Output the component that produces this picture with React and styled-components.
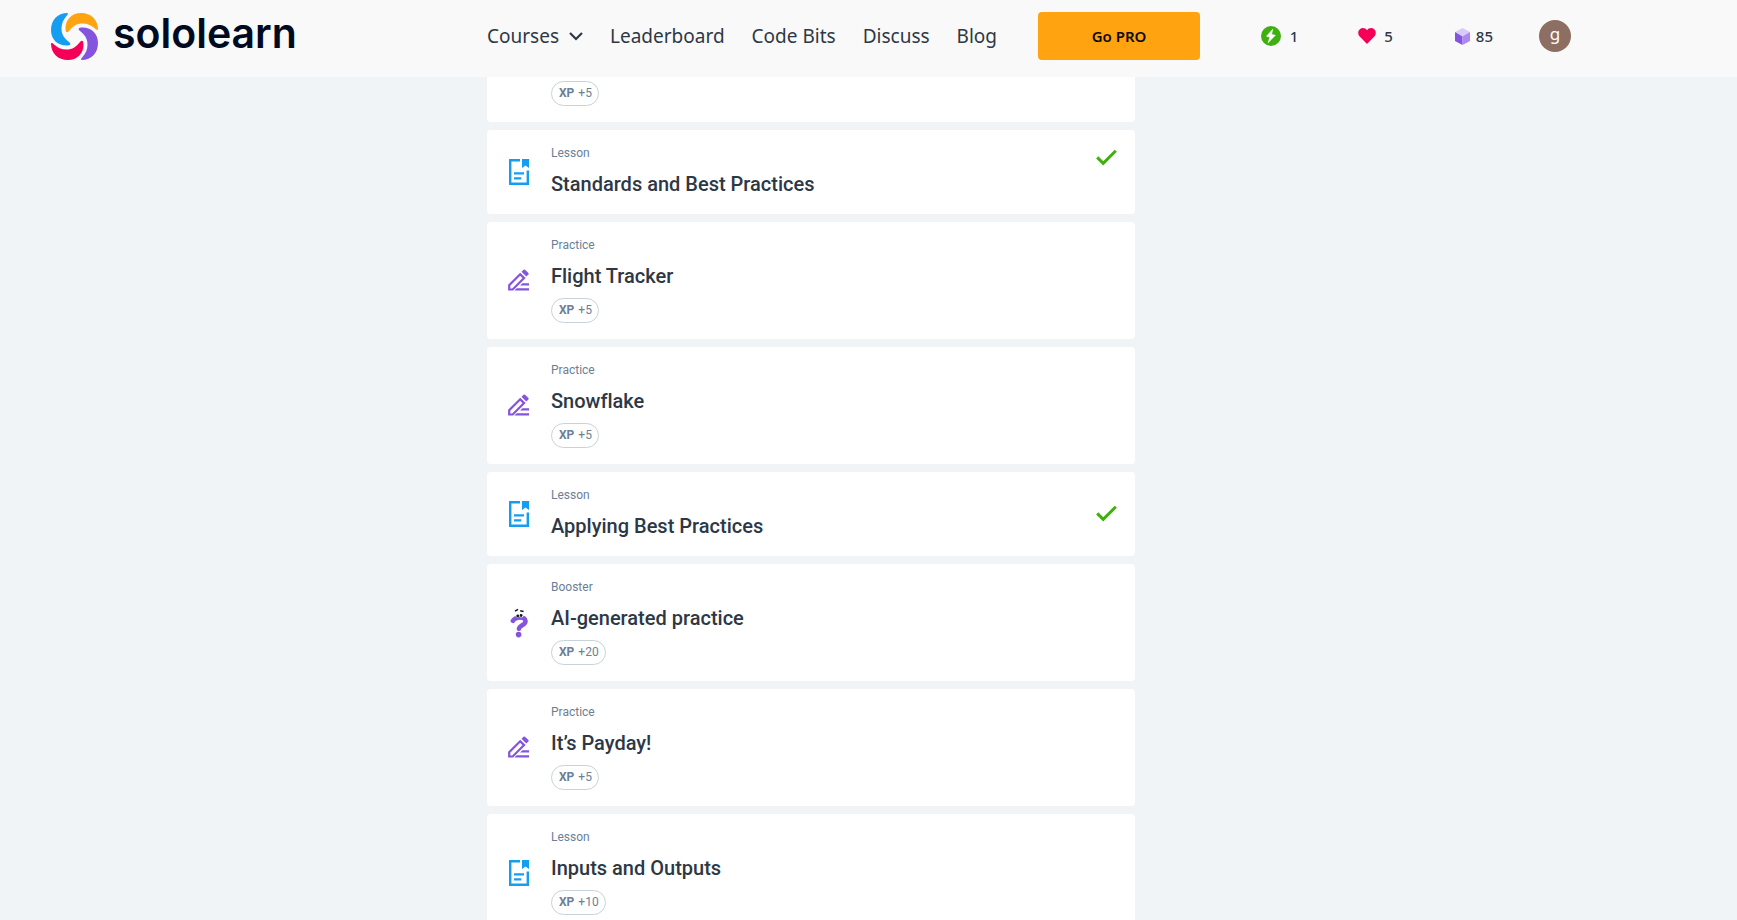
import React from "react";
import styled, { createGlobalStyle } from "styled-components";

const GlobalStyle = createGlobalStyle`
  * { box-sizing: border-box; }
  body {
    margin: 0;
    background: #f0f4f7;
    color: #2d3846;
    font-family: Roboto, "Noto Sans", sans-serif;
  }
`;

const Page = styled.div`
  display: flex;
  flex-direction: column;
  height: 100vh;
`;

const Header = styled.header`
  display: grid;
  grid-template-columns: 1fr 648px 1fr;
  flex: none;
  height: 77px;
  padding: 0 166px 5px 51px;
  align-items: center;
  background: #f9f9f9;
`;

const Logo = styled.a`
  display: flex;
  align-items: center;
  gap: 15px;
  color: #000b21;
  font: 600 41px/46px Inter, sans-serif;
  text-decoration: none;
`;

const Wordmark = styled.span`
  padding-bottom: 6px;
`;

const Middle = styled.div`
  display: flex;
  align-items: center;
  justify-content: space-between;
  margin-right: -65px;
`;

const Nav = styled.nav`
  display: flex;
  align-items: center;
  gap: 27px;
`;

const NavLink = styled.a`
  color: #2d3846;
  font: 400 19px/24px "Noto Sans", sans-serif;
  text-decoration: none;
  white-space: nowrap;
`;

const NavButton = styled.button`
  display: flex;
  align-items: center;
  gap: 10px;
  padding: 0;
  border: 0;
  background: none;
  color: #2d3846;
  font: 400 19px/24px "Noto Sans", sans-serif;
`;

const ProButton = styled.button`
  width: 162px;
  height: 48px;
  border: 0;
  border-radius: 4px;
  background: #ffa310;
  color: #0b0b12;
  font: 600 15px/24px "Noto Sans", sans-serif;
`;

const Status = styled.div`
  display: flex;
  align-items: center;
  justify-content: flex-end;
`;

const Counter = styled.div`
  display: flex;
  align-items: center;
  gap: ${(p) => p.$gap}px;
  margin-right: ${(p) => p.$after}px;
  font: 500 15px/24px "Noto Sans", sans-serif;
`;

const Avatar = styled.button`
  width: 32px;
  height: 32px;
  padding: 0 0 4px;
  border: 0;
  border-radius: 50%;
  background: #8d6e63;
  color: #fff;
  font: 400 17px/24px "Noto Sans", sans-serif;
`;

const Main = styled.main`
  flex: 1;
  min-height: 0;
  padding-right: 115px;
  overflow-y: auto;
  scrollbar-width: none;
`;

const Lessons = styled.ul`
  display: flex;
  flex-direction: column;
  gap: 8px;
  width: 648px;
  max-width: 100%;
  margin: 0 auto;
  padding: 0;
  list-style: none;
`;

const Card = styled.li`
  display: flex;
  align-items: center;
  gap: 20px;
  padding: ${(p) => (p.$continued ? "4px 16px 16px 20px" : "16px 16px 16px 20px")};
  border-radius: ${(p) => (p.$continued ? "0 0 4px 4px" : "4px")};
  background: #fff;
`;

const IconSlot = styled.div`
  display: flex;
  flex: none;
  justify-content: center;
  width: 24px;
`;

const Body = styled.div`
  flex: 1;
`;

const Kind = styled.div`
  margin-bottom: 12px;
  color: #6b7f96;
  font-size: 12px;
  line-height: 14px;
`;

const Title = styled.h2`
  margin: 0;
  padding-bottom: 2px;
  font-size: 20px;
  font-weight: 500;
  font-variant-ligatures: none;
  line-height: 24px;
`;

const Badge = styled.span`
  display: flex;
  align-items: center;
  gap: 4px;
  width: fit-content;
  height: 25px;
  margin-top: ${(p) => (p.$flush ? 0 : 8)}px;
  padding: 0 6px 1px 7px;
  border: 1px solid #c8d2db;
  border-radius: 13px;
  color: #6b7f96;
  font-size: 12px;
  line-height: 16px;
`;

const Strong = styled.b`
  font-weight: 700;
`;

const Done = styled.div`
  display: flex;
  flex: none;
  align-self: ${(p) => (p.$top ? "flex-start" : "center")};
`;

const petal =
  "M16.5 0C6.500 0 0 7 0 17C0 26 6 32.500 15.500 32.500C19.500 32.500 20.500 31 18 29C13 25 10.500 21.500 10.500 15.500C10.500 10 12.500 6.500 15.500 3C17.500 1 17 0 16.500 0Z";

const LogoMark = () => (
  <svg width="47" height="47" viewBox="0 0 47 47" aria-hidden="true">
    <path d={petal} fill="#149ef2" />
    <path d={petal} fill="#ffa310" transform="rotate(90 23.5 23.500)" />
    <path d={petal} fill="#8454de" transform="rotate(180 23.5 23.500)" />
    <path d={petal} fill="#f50057" transform="rotate(270 23.5 23.500)" />
  </svg>
);

const Chevron = () => (
  <svg width="14" height="9" viewBox="0 0 14 9" fill="none" stroke="#2d3846" strokeWidth="2.2" aria-hidden="true">
    <path d="M1 1l6 6 6-6" />
  </svg>
);

const Bolt = () => (
  <svg width="20" height="20" viewBox="0 0 20 20" aria-hidden="true">
    <circle cx="10" cy="10" r="10" fill="#3fb00e" />
    <path d="M11.8 3.200L5.500 10.300l3.300.8-1.700 5.700 7.200-7.500-3.700-.9z" fill="#fff" stroke="#fff" strokeWidth=".6" strokeLinejoin="round" />
  </svg>
);

const Heart = () => (
  <svg width="18" height="16" viewBox="0 0 18 16" aria-hidden="true">
    <path d="M9 16L1.700 8.600C-.3 6.400-.2 3.100 1.600 1.400C3.800-.6 7.300-.3 9 2.300C10.700-.3 14.200-.6 16.400 1.400C18.200 3.100 18.300 6.400 16.300 8.600Z" fill="#f50057" />
  </svg>
);

const Gem = () => (
  <svg width="15" height="17" viewBox="0 0 15 17" aria-hidden="true">
    <path d="M7.500 0L15 4 7.500 8.500 0 4z" fill="#d9caf9" />
    <path d="M0 4l7.500 4.500V17L0 13z" fill="#8454de" />
    <path d="M15 4L7.500 8.500V17L15 13z" fill="#ad87f4" />
  </svg>
);

const LessonIcon = () => (
  <svg width="20" height="26" viewBox="0 0 20 26" aria-hidden="true">
    <path d="M11 1.200H1.200v23.600h17.600V11.500" fill="none" stroke="#149ef2" strokeWidth="2.400" />
    <path d="M13 0h7v9l-3.500-2.400L13 9z" fill="#149ef2" />
    <path d="M5 14.300h10M5 19.300h7.300" stroke="#149ef2" strokeWidth="2.300" />
  </svg>
);

const PencilIcon = () => (
  <svg width="24" height="24" viewBox="1 1 24 24" aria-hidden="true">
    <g transform="translate(1 1)">
      <path d="M2.200 20.500v-4.300L13.200 5.200l3.900 3.900L5.700 20.500z" fill="none" stroke="#8454de" strokeWidth="2.200" />
      <path d="M14.500 2.800l2.100-2.100q.7-.6 1.400 0l3.400 3.400q.6.700 0 1.300L19.300 7.500z" fill="#8454de" />
      <path d="M15.400 14.300H22v2.300h-8.900zM9.800 19.200H22v2.400H7.400z" fill="#8454de" />
    </g>
  </svg>
);

const QuestionIcon = () => (
  <svg width="18" height="30" viewBox="0 0 18 30" aria-hidden="true">
    <path d="M2.900 12.800C5 9 15.600 7.600 15.500 13.200C15.400 17.500 9.500 17 9 20.800" fill="none" stroke="#8454de" strokeWidth="4.600" strokeLinecap="round" />
    <circle cx="8.600" cy="26.600" r="2.800" fill="#8454de" />
    <circle cx="7.600" cy="7.300" r="2.200" fill="#fff" />
    <circle cx="11.400" cy="7.200" r="2.200" fill="#fff" />
    <circle cx="7.700" cy="7.900" r="1.400" fill="#111526" />
    <circle cx="11.100" cy="7.500" r="1.400" fill="#111526" />
    <path d="M5 3.200L8 1.400M10.200 2.800L13.600 3.400" stroke="#111526" strokeWidth="1.500" />
  </svg>
);

const Check = () => (
  <svg width="24" height="24" viewBox="0 0 24 24" role="img" aria-label="Completed">
    <path d="M2.200 11.400l6 6L20.800 4.800" fill="none" stroke="#3fb00e" strokeWidth="3" />
  </svg>
);

const icons = { Lesson: LessonIcon, Practice: PencilIcon, Booster: QuestionIcon };

const items = [
  { xp: 5, continued: true },
  { kind: "Lesson", title: "Standards and Best Practices", done: "top" },
  { kind: "Practice", title: "Flight Tracker", xp: 5 },
  { kind: "Practice", title: "Snowflake", xp: 5 },
  { kind: "Lesson", title: "Applying Best Practices", done: "center" },
  { kind: "Booster", title: "AI-generated practice", xp: 20 },
  { kind: "Practice", title: "It’s Payday!", xp: 5 },
  { kind: "Lesson", title: "Inputs and Outputs", xp: 10 },
];

function LessonCard({ kind, title, xp, done, continued }) {
  const Icon = icons[kind];
  return (
    <Card $continued={continued}>
      <IconSlot>{Icon && <Icon />}</IconSlot>
      <Body>
        {kind && <Kind>{kind}</Kind>}
        {title && <Title>{title}</Title>}
        {xp && (
          <Badge $flush={continued}>
            <Strong>XP</Strong>
            <span>+{xp}</span>
          </Badge>
        )}
      </Body>
      {done && (
        <Done $top={done === "top"}>
          <Check />
        </Done>
      )}
    </Card>
  );
}

export default function App() {
  return (
    <Page>
      <GlobalStyle />
      <Header>
        <Logo href="#">
          <LogoMark />
          <Wordmark>sololearn</Wordmark>
        </Logo>
        <Middle>
          <Nav>
            <NavButton type="button">
              Courses
              <Chevron />
            </NavButton>
            <NavLink href="#">Leaderboard</NavLink>
            <NavLink href="#">Code Bits</NavLink>
            <NavLink href="#">Discuss</NavLink>
            <NavLink href="#">Blog</NavLink>
          </Nav>
          <ProButton type="button">Go PRO</ProButton>
        </Middle>
        <Status>
          <Counter $gap={9} $after={60}>
            <Bolt />1
          </Counter>
          <Counter $gap={8} $after={62}>
            <Heart />5
          </Counter>
          <Counter $gap={6} $after={46}>
            <Gem />
            85
          </Counter>
          <Avatar type="button">g</Avatar>
        </Status>
      </Header>
      <Main>
        <Lessons>
          {items.map((item, i) => (
            <LessonCard key={i} {...item} />
          ))}
        </Lessons>
      </Main>
    </Page>
  );
}
